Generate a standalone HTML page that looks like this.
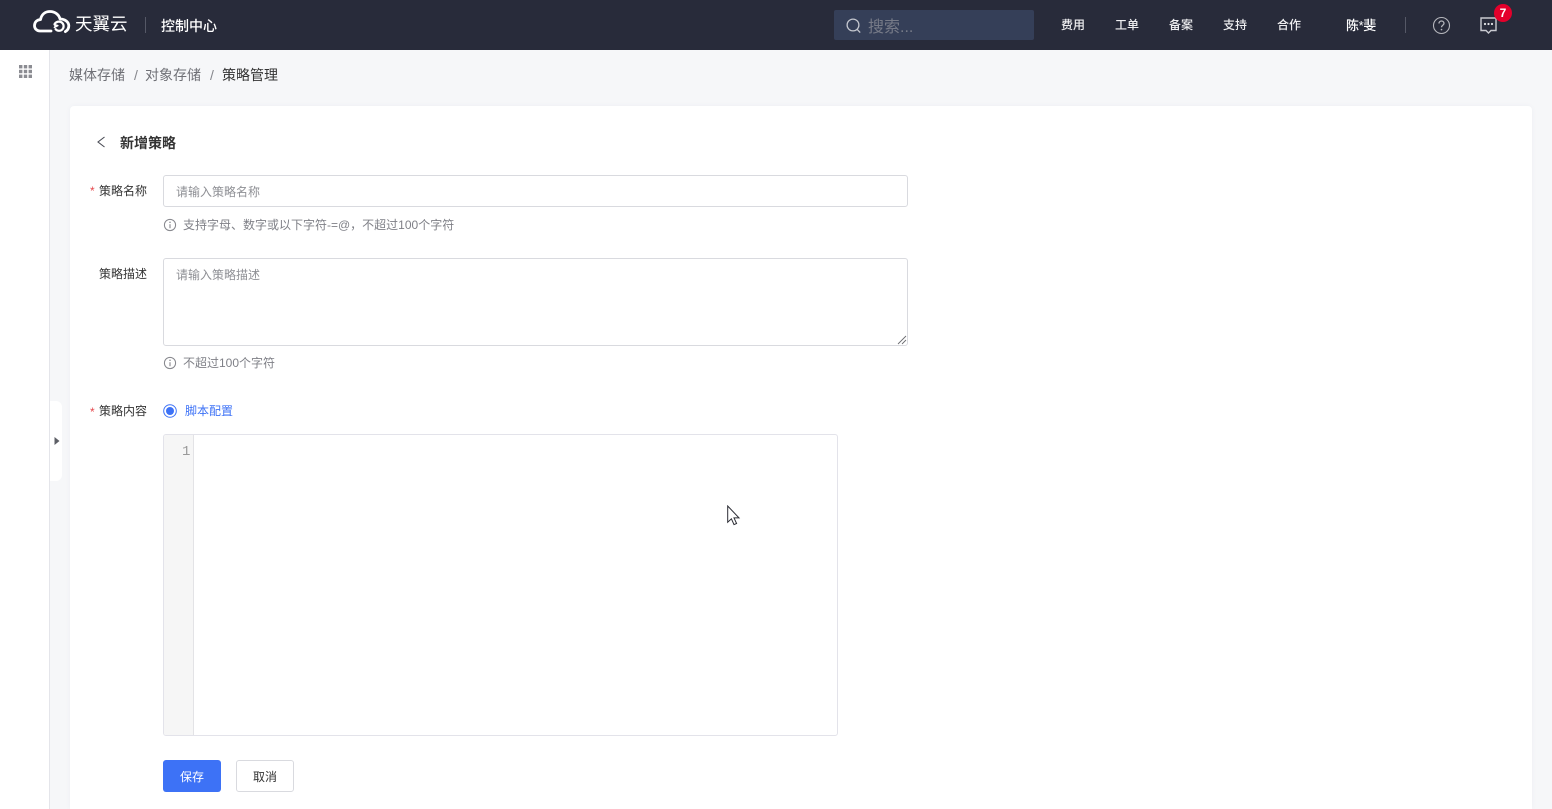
<!DOCTYPE html>
<html lang="zh">
<head>
<meta charset="utf-8">
<title>新增策略</title>
<style>
*{box-sizing:border-box}
html,body{margin:0;padding:0;width:1552px;height:809px;overflow:hidden;background:#f6f7f9;font-family:"Liberation Sans","Noto Sans CJK SC",sans-serif;color:#333}
#wrap{position:absolute;left:0;top:0;width:1552px;height:809px;overflow:hidden}
.a{position:absolute;white-space:nowrap;line-height:1}
#top{position:absolute;left:0;top:0;width:1552px;height:50px;background:#282b3a}
.nav{color:#eeeef0;font-size:12px;top:19px;font-weight:500}
#side{position:absolute;left:0;top:50px;width:50px;height:759px;background:#fff;border-right:1px solid #e4e5ea}
#tab{position:absolute;left:50px;top:401px;width:12px;height:80px;background:#fff;border-radius:0 6px 6px 0}
#card{position:absolute;left:70px;top:106px;width:1462px;height:703px;background:#fff;border-radius:4px 4px 0 0;box-shadow:0 0 6px rgba(40,50,90,.04)}
.box{position:absolute;background:#fff;border:1px solid #d9dadf;border-radius:3px}
.lab{font-size:12px;color:#333}
.ph{font-size:12px;color:#8e8f94}
.hint{font-size:12px;color:#7f8087}
.star{color:#e5484d;font-size:12px}
</style>
</head>
<body>
<div id="wrap">
<div id="top">
  <svg class="a" style="left:32px;top:9px" width="40" height="26" viewBox="0 0 40 26" fill="none" stroke="#fff" stroke-width="2.8" stroke-linecap="round" stroke-linejoin="round">
    <path d="M19 22H8C4.5 22 2.5 19.4 2.5 16.6 2.5 13.2 5 10.6 8.5 10.6 9.5 5.6 13 2.5 18 2.5 23 2.5 27 5.6 28 10 33 10 36.8 13 36.8 16.8 36.8 19.4 35.4 21.4 33.4 22.6"/>
    <path d="M22.6 15C23.6 13.4 25.2 12.6 27 12.6 29.6 12.6 31.6 14.6 31.6 17.2 31.6 19.8 29.6 21.8 27 21.8 25.6 21.8 24.4 21.2 23.6 20.2" stroke-width="2.2"/>
    <path d="M22.2 15.6L25.8 16.6 22.4 18.4" stroke-width="1.6" fill="#fff"/>
  </svg>
  <div class="a" style="left:75px;top:16px;font-size:17.5px;color:#fff">天翼云</div>
  <div class="a" style="left:145px;top:17px;width:1px;height:16px;background:#555866"></div>
  <div class="a" style="left:161px;top:19px;font-size:14px;color:#fff;font-weight:500">控制中心</div>

  <div class="a" style="left:834px;top:10px;width:200px;height:30px;background:#353f58;border-radius:2px"></div>
  <svg class="a" style="left:845px;top:17px" width="18" height="18" viewBox="0 0 18 18" fill="none" stroke="#c2c5cd" stroke-width="1.3"><circle cx="8" cy="8" r="5.9"/><path d="M12.2 12.4L15.2 15.6"/></svg>
  <div class="a" style="left:868px;top:20px;font-size:16px;color:#777b88">搜索...</div>

  <div class="a nav" style="left:1061px">费用</div>
  <div class="a nav" style="left:1115px">工单</div>
  <div class="a nav" style="left:1169px">备案</div>
  <div class="a nav" style="left:1223px">支持</div>
  <div class="a nav" style="left:1277px">合作</div>
  <div class="a nav" style="left:1346px;color:#fff;font-size:13px;top:19px;font-weight:500;letter-spacing:-.4px">陈*斐</div>
  <div class="a" style="left:1405px;top:17px;width:1px;height:16px;background:#555866"></div>
  <svg class="a" style="left:1432px;top:16px" width="19" height="19" viewBox="0 0 19 19" fill="none" stroke="#b5b6bc" stroke-width="1.1"><circle cx="9.5" cy="9.5" r="8"/><path d="M7 7.5C7 6 8.1 5 9.5 5S12 6 12 7.4C12 9.2 9.5 9.3 9.5 11.2" stroke-width="1.3"/><circle cx="9.5" cy="13.6" r=".8" fill="#b5b6bc" stroke="none"/></svg>
  <svg class="a" style="left:1479px;top:16px" width="20" height="20" viewBox="0 0 20 20" fill="none" stroke="#c9cad0" stroke-width="1.4"><path d="M2 2H17V14.5H12L9.5 17 7 14.5H2Z"/><circle cx="6" cy="8" r="1.1" fill="#e2e3e6" stroke="none"/><circle cx="9.5" cy="8" r="1.1" fill="#e2e3e6" stroke="none"/><circle cx="13" cy="8" r="1.1" fill="#e2e3e6" stroke="none"/></svg>
  <div class="a" style="left:1494px;top:4px;width:18px;height:18px;border-radius:9px;background:#e4002b;color:#fff;font-size:12px;font-weight:bold;text-align:center;line-height:18px">7</div>
</div>

<div id="side">
  <svg class="a" style="left:19px;top:15px" width="13" height="13" viewBox="0 0 13 13" fill="#8b8c92">
    <rect x="0" y="0" width="3.4" height="3.4"/><rect x="4.8" y="0" width="3.4" height="3.4"/><rect x="9.6" y="0" width="3.4" height="3.4"/>
    <rect x="0" y="4.8" width="3.4" height="3.4"/><rect x="4.8" y="4.8" width="3.4" height="3.4"/><rect x="9.6" y="4.8" width="3.4" height="3.4"/>
    <rect x="0" y="9.6" width="3.4" height="3.4"/><rect x="4.8" y="9.6" width="3.4" height="3.4"/><rect x="9.6" y="9.6" width="3.4" height="3.4"/>
  </svg>
</div>
<div id="tab"></div>
<svg class="a" style="left:54px;top:437px" width="6" height="8" viewBox="0 0 6 8"><path d="M0.5 0L5.5 4 .5 8Z" fill="#5d5f66"/></svg>

<div class="a" style="left:69px;top:68px;font-size:14px;color:#6f7076">媒体存储</div>
<div class="a" style="left:134px;top:68px;font-size:14px;color:#85868c">/</div>
<div class="a" style="left:145px;top:68px;font-size:14px;color:#6f7076">对象存储</div>
<div class="a" style="left:210px;top:68px;font-size:14px;color:#85868c">/</div>
<div class="a" style="left:222px;top:68px;font-size:14px;color:#333">策略管理</div>

<div id="card"></div>

<svg class="a" style="left:96px;top:136px" width="10" height="12" viewBox="0 0 10 12" fill="none" stroke="#4a4c55" stroke-width="1.1"><path d="M8.5 1L2 6 8.5 11"/></svg>
<div class="a" style="left:120px;top:136px;font-size:14px;font-weight:bold;color:#333">新增策略</div>

<div class="a star" style="left:90px;top:185px">*</div>
<div class="a lab" style="left:99px;top:185px">策略名称</div>
<div class="box" style="left:163px;top:175px;width:745px;height:32px"></div>
<div class="a ph" style="left:176px;top:186px">请输入策略名称</div>
<svg class="a" style="left:163px;top:218px" width="14" height="14" viewBox="0 0 14 14" fill="none" stroke="#85868c"><circle cx="7" cy="7" r="5.6"/><path d="M7 6.2V10.2" stroke-width="1.1"/><circle cx="7" cy="4.3" r=".75" fill="#85868c" stroke="none"/></svg>
<div class="a hint" style="left:183px;top:219px">支持字母、数字或以下字符-=@，不超过100个字符</div>

<div class="a lab" style="left:99px;top:268px">策略描述</div>
<div class="box" style="left:163px;top:258px;width:745px;height:88px"></div>
<div class="a ph" style="left:176px;top:269px">请输入策略描述</div>
<svg class="a" style="left:897px;top:335px" width="10" height="10" viewBox="0 0 10 10" fill="none" stroke="#6c6d72" stroke-width=".9"><path d="M1 9L9 1M5 9L9 5"/></svg>
<svg class="a" style="left:163px;top:356px" width="14" height="14" viewBox="0 0 14 14" fill="none" stroke="#85868c"><circle cx="7" cy="7" r="5.6"/><path d="M7 6.2V10.2" stroke-width="1.1"/><circle cx="7" cy="4.3" r=".75" fill="#85868c" stroke="none"/></svg>
<div class="a hint" style="left:183px;top:357px">不超过100个字符</div>

<div class="a star" style="left:90px;top:406px">*</div>
<div class="a lab" style="left:99px;top:405px">策略内容</div>
<svg class="a" style="left:163px;top:404px" width="14" height="14" viewBox="0 0 14 14"><circle cx="7" cy="7" r="6.3" fill="#fff" stroke="#3d72f6" stroke-width="1"/><circle cx="7" cy="7" r="4" fill="#3d72f6"/></svg>
<div class="a" style="left:185px;top:405px;font-size:12px;color:#3d72f6">脚本配置</div>

<div class="box" style="left:163px;top:434px;width:675px;height:302px;border-color:#e3e3ea"></div>
<div class="a" style="left:164px;top:435px;width:30px;height:300px;background:#f6f6f6;border-right:1px solid #e3e3e6;border-radius:2px 0 0 2px"></div>
<div class="a" style="left:182px;top:445px;font-size:14px;color:#9a9a9a;font-family:'Liberation Mono',monospace">1</div>

<div class="a" style="left:163px;top:760px;width:58px;height:32px;background:#3d72f6;border-radius:3px;color:#fff;font-size:12px;text-align:center;line-height:34px">保存</div>
<div class="a" style="left:236px;top:760px;width:58px;height:32px;background:#fff;border:1px solid #d9dadf;border-radius:3px;color:#333;font-size:12px;text-align:center;line-height:32px">取消</div>

<svg class="a" style="left:727px;top:505px" width="14" height="22" viewBox="0 0 14 22"><path d="M.7 1V17.2L4.4 13.8 7 19.6 9.6 18.5 7 12.9H12Z" fill="#fff" stroke="#2c2d35" stroke-width="1"/></svg>
</div>
</body>
</html>
